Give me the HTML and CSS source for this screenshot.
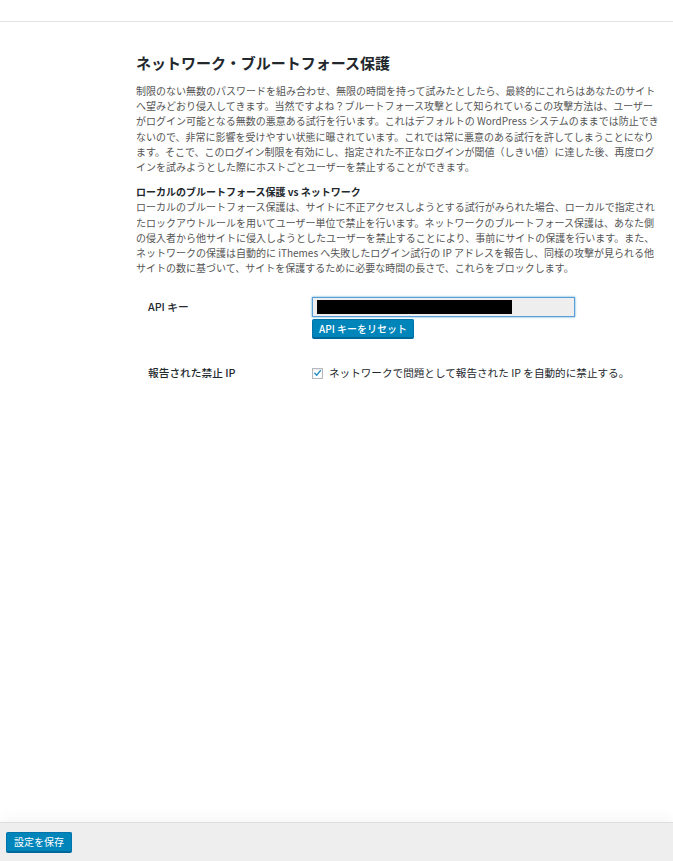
FILE: index.html
```html
<!DOCTYPE html>
<html lang="ja">
<head>
<meta charset="utf-8">
<title>ネットワーク・ブルートフォース保護</title>
<link rel="stylesheet" href="styles.css">
</head>
<body>
<div class="page">
  <div class="topbar"></div>
  <main class="main">
    <h2 class="title">ネットワーク・ブルートフォース保護</h2>
    <p class="desc">制限のない無数のパスワードを組み合わせ、無限の時間を持って試みたとしたら、最終的にこれらはあなたのサイトへ望みどおり侵入してきます。当然ですよね？ブルートフォース攻撃として知られているこの攻撃方法は、ユーザーがログイン可能となる無数の悪意ある試行を行います。これはデフォルトの WordPress システムのままでは防止できないので、非常に影響を受けやすい状態に曝されています。これでは常に悪意のある試行を許してしまうことになります。そこで、このログイン制限を有効にし、指定された不正なログインが閾値（しきい値）に達した後、再度ログインを試みようとした際にホストごとユーザーを禁止することができます。</p>
    <h3 class="subtitle">ローカルのブルートフォース保護 vs ネットワーク</h3>
    <p class="desc desc-tight">ローカルのブルートフォース保護は、サイトに不正アクセスしようとする試行がみられた場合、ローカルで指定されたロックアウトルールを用いてユーザー単位で禁止を行います。ネットワークのブルートフォース保護は、あなた側の侵入者から他サイトに侵入しようとしたユーザーを禁止することにより、事前にサイトの保護を行います。また、ネットワークの保護は自動的に iThemes へ失敗したログイン試行の IP アドレスを報告し、同様の攻撃が見られる他サイトの数に基づいて、サイトを保護するために必要な時間の長さで、これらをブロックします。</p>

    <div class="form">
      <div class="label">API キー</div>
      <div class="field">
        <div class="keyinput"><span class="redact"></span></div>
        <button class="btn btn-reset" type="button">API キーをリセット</button>
      </div>
      <div class="label">報告された禁止 IP</div>
      <div class="field">
        <label class="check">
          <span class="box"><svg viewBox="0 0 10 10" width="10" height="10"><path d="M2 5.2 L4.2 7.4 L8.2 2.4" fill="none" stroke="#1e8cbe" stroke-width="1.6" stroke-linecap="round" stroke-linejoin="round"/></svg></span>
          <span>ネットワークで問題として報告された IP を自動的に禁止する。</span>
        </label>
      </div>
    </div>
  </main>
  <footer class="footer">
    <button class="btn btn-save" type="button">設定を保存</button>
  </footer>
</div>
</body>
</html>
```

FILE: styles.css
```css
html, body {
  margin: 0;
  padding: 0;
  background: #fff;
}
body {
  font-family: "Noto Sans CJK JP", "Noto Sans", sans-serif;
  color: #23282d;
  font-size: 10px;
  line-height: 1.5;
}
.page {
  display: flex;
  flex-direction: column;
  min-height: 100vh;
}
.topbar {
  height: 21px;
  border-bottom: 1px solid #e2e2e2;
}
.main {
  padding: 31px 0 0 136px;
  width: 524px;
}
.title {
  margin: 0;
  font-size: 15px;
  line-height: 20px;
  font-weight: 700;
  color: #23282d;
}
.desc {
  margin: 10px 0 0;
  color: #555;
  font-size: 10px;
  line-height: 15.2px;
}
.desc-tight {
  margin-top: 0;
}
.subtitle {
  margin: 10px 0 0;
  font-size: 10px;
  line-height: 15.2px;
  font-weight: 700;
  color: #23282d;
}
.form {
  display: grid;
  grid-template-columns: 164px 1fr;
  row-gap: 24px;
  margin: 22px 0 0 12px;
}
.label {
  color: #23282d;
  font-size: 10.7px;
  line-height: 20px;
  font-weight: 500;
}
.field {
  display: flex;
  flex-direction: column;
  align-items: flex-start;
  gap: 2px;
}
.keyinput {
  box-sizing: border-box;
  width: 263px;
  height: 20px;
  background: #eee;
  border: 1px solid #5b9dd9;
  box-shadow: 0 0 2px rgba(30, 140, 190, 0.8);
  padding: 2px 0 0 4px;
}
.redact {
  display: block;
  width: 195px;
  height: 14px;
  background: #000;
}
.btn {
  font-family: "Noto Sans CJK JP", "Noto Sans", sans-serif;
  background: #0085ba;
  color: #fff;
  border: 1px solid #0073aa;
  border-bottom-color: #006799;
  box-shadow: inset 0 -1px 0 #006799;
  border-radius: 2px;
  font-size: 10px;
  line-height: 18px;
  height: 20px;
  padding: 0 7px;
  cursor: pointer;
  white-space: nowrap;
}
.btn-reset {
  font-weight: 500;
  padding: 0 6px;
}
.check {
  display: flex;
  align-items: center;
  gap: 6px;
  color: #23282d;
  font-size: 10.6px;
  line-height: 20px;
}
.box {
  box-sizing: border-box;
  width: 11px;
  height: 11px;
  border: 1px solid #b4b9be;
  background: #fff;
  display: flex;
  align-items: center;
  justify-content: center;
  box-shadow: inset 0 1px 2px rgba(0,0,0,0.1);
}
.box svg {
  display: block;
}
.footer {
  margin-top: auto;
  height: 38px;
  background: #eee;
  border-top: 1px solid #ddd;
  box-shadow: 0 -8px 10px -2px rgba(0,0,0,0.03);
  display: flex;
  align-items: center;
  padding-left: 6px;
}
.btn-save {
  height: 21px;
  padding: 0 7px;
  font-weight: 400;
}
```
